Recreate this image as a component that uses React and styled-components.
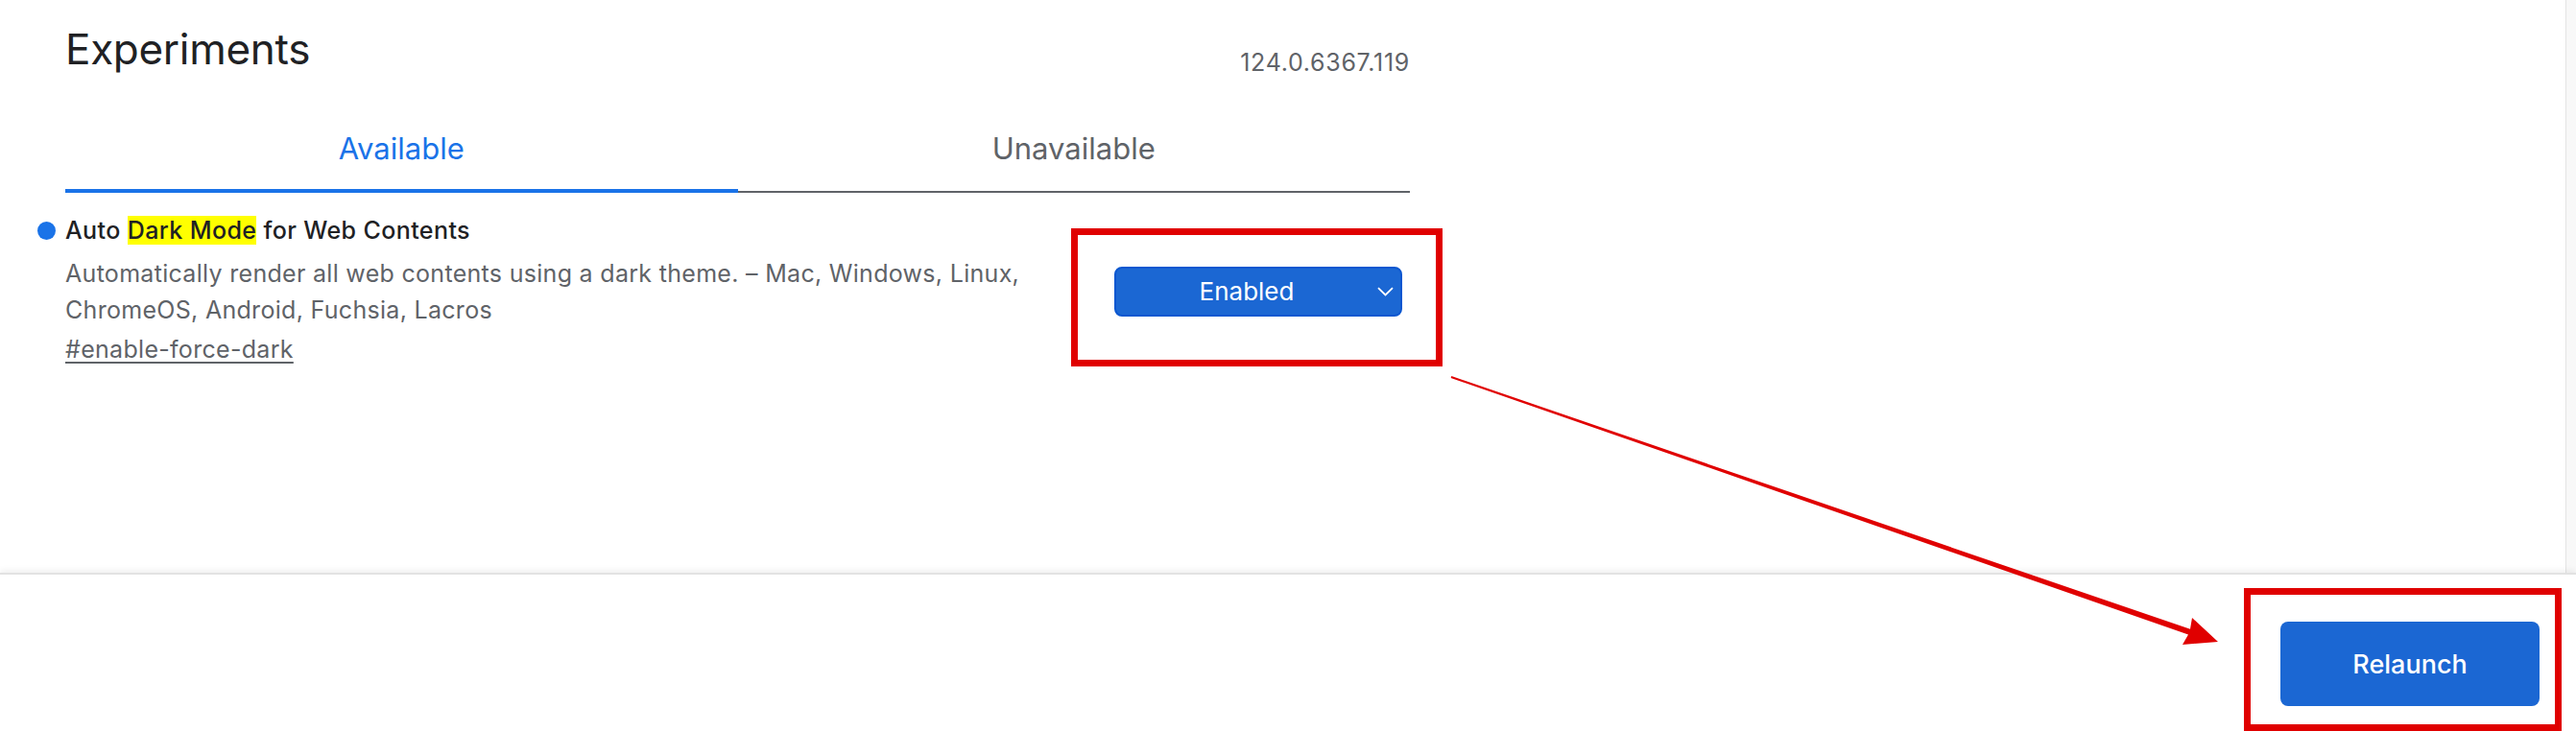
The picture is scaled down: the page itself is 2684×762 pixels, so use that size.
import React from 'react';
import styled, { createGlobalStyle } from 'styled-components';

const GlobalStyle = createGlobalStyle`
  html, body {
    margin: 0;
    padding: 0;
    background: #fff;
  }
  body {
    font-family: Inter, "Noto Sans", Roboto, sans-serif;
    color: #202124;
    -webkit-font-smoothing: antialiased;
  }
`;

const Page = styled.div`
  position: relative;
  height: 100vh;
  display: flex;
  flex-direction: column;
  overflow: hidden;
`;

const Main = styled.div`
  flex: 1;
  display: flex;
  min-height: 0;
`;

const Content = styled.div`
  flex: 1;
`;

const Container = styled.div`
  width: 1401px;
  margin-left: 68px;
`;

// the page scrollbar track on the right
const ScrollTrack = styled.div`
  width: 10px;
  background: #f8f8f8;
  border-left: 1px solid #e4e4e4;
`;

const Header = styled.div`
  display: flex;
  justify-content: space-between;
  align-items: flex-start;
  padding-top: 25px;
`;

const Heading = styled.h1`
  margin: 0;
  font-size: 44px;
  line-height: 52px;
  font-weight: 400;
  letter-spacing: -0.3px;
  color: #202124;
`;

const Version = styled.div`
  margin-top: 25px;
  font-size: 25px;
  line-height: 30px;
  letter-spacing: 0.7px;
  color: #5f6368;
`;

const TabList = styled.div`
  display: flex;
  margin-top: 34px;
  border-bottom: 2px solid #5f6368;
`;

const Tab = styled.div`
  flex: 1;
  text-align: center;
  padding: 21px 0 22px;
  margin-bottom: -2px;
  font-size: 31px;
  line-height: 40px;
  color: ${(p) => (p.$active ? '#1a73e8' : '#5f6368')};
  border-bottom: 4px solid ${(p) => (p.$active ? '#1a73e8' : 'transparent')};
`;

const Experiment = styled.div`
  display: flex;
  align-items: center;
  justify-content: space-between;
  margin-top: 23px;
`;

const TextCol = styled.div`
  width: 1030px;
`;

const ExperimentName = styled.div`
  position: relative;
  font-size: 25px;
  line-height: 32px;
  font-weight: 500;
  letter-spacing: 0.4px;
  color: #202124;

  &::before {
    content: '';
    position: absolute;
    left: -29px;
    top: 7px;
    width: 19px;
    height: 19px;
    border-radius: 50%;
    background: #1a73e8;
  }
`;

const Highlight = styled.mark`
  background: #ffff00;
  color: inherit;
  padding: 0;
`;

const Description = styled.div`
  margin-top: 10px;
  font-size: 25px;
  line-height: 38px;
  letter-spacing: 0.3px;
  color: #5f6368;
`;

const Permalink = styled.a`
  display: block;
  margin-top: 3px;
  font-size: 25px;
  line-height: 38px;
  letter-spacing: 0.3px;
  color: #5f6368;
  text-decoration: underline;
  text-decoration-thickness: 2px;
  text-underline-offset: 4px;
`;

// red annotation frame drawn over the control
const Annotated = styled.div`
  position: relative;
  margin-right: ${(p) => p.$mr || 0}px;

  &::after {
    content: '';
    position: absolute;
    top: ${(p) => -p.$t}px;
    left: ${(p) => -p.$l}px;
    right: ${(p) => -p.$r}px;
    bottom: ${(p) => -p.$b}px;
    border: 7px solid #e00000;
    pointer-events: none;
  }
`;

const Select = styled.div`
  display: flex;
  align-items: center;
  box-sizing: border-box;
  width: 300px;
  height: 52px;
  border: 2px solid #0b57d0;
  border-radius: 8px;
  background: #1b67d3;
  color: #fff;
  font-size: 26px;
`;

const SelectLabel = styled.span`
  flex: 1;
  text-align: center;
`;

const Chevron = styled.svg`
  width: 17px;
  height: 10px;
  margin-right: 7px;
  flex-shrink: 0;
`;

const Footer = styled.div`
  flex-shrink: 0;
  box-sizing: border-box;
  height: 165px;
  display: flex;
  justify-content: flex-end;
  align-items: flex-start;
  padding: 49px 38px 0 0;
  background: #fff;
  border-top: 2px solid #e2e2e2;
  box-shadow: 0 -3px 6px rgba(0, 0, 0, 0.06);
`;

const RelaunchButton = styled.button`
  width: 270px;
  height: 88px;
  border: none;
  border-radius: 8px;
  background: #1b67d3;
  color: #fff;
  font-family: inherit;
  font-size: 27px;
  font-weight: 500;
`;

const ArrowLayer = styled.svg`
  position: absolute;
  top: 0;
  left: 0;
  pointer-events: none;
`;

export default function App() {
  return (
    <Page>
      <GlobalStyle />
      <Main>
        <Content>
          <Container>
            <Header>
              <Heading>Experiments</Heading>
              <Version>124.0.6367.119</Version>
            </Header>
            <TabList>
              <Tab $active>Available</Tab>
              <Tab>Unavailable</Tab>
            </TabList>
            <Experiment>
              <TextCol>
                <ExperimentName>
                  Auto <Highlight>Dark Mode</Highlight> for Web Contents
                </ExperimentName>
                <Description>
                  Automatically render all web contents using a dark theme. – Mac, Windows, Linux,
                  ChromeOS, Android, Fuchsia, Lacros
                </Description>
                <Permalink href="#enable-force-dark">#enable-force-dark</Permalink>
              </TextCol>
              <Annotated $mr={8} $t={40} $l={45} $r={42} $b={52}>
                <Select>
                  <SelectLabel>Enabled</SelectLabel>
                  <Chevron viewBox="0 0 17 10">
                    <path d="M1 1.2 L8.5 8.5 L16 1.2" fill="none" stroke="#fff" strokeWidth="1.8" />
                  </Chevron>
                </Select>
              </Annotated>
            </Experiment>
          </Container>
        </Content>
        <ScrollTrack />
      </Main>
      <Footer>
        <Annotated $t={35} $l={38} $r={23} $b={26}>
          <RelaunchButton>Relaunch</RelaunchButton>
        </Annotated>
      </Footer>
      <ArrowLayer width="2684" height="762" viewBox="0 0 2684 762">
        <polygon
          points="1512.3,392.1 2282,655.8 2284,644 2311,669 2274,672 2280,661.4 1511.7,393.9"
          fill="#e00000"
        />
      </ArrowLayer>
    </Page>
  );
}
